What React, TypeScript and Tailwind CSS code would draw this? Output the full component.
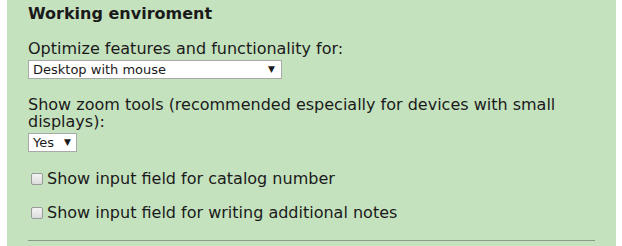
const App = () => {
  return (
    <div className="w-[622px] h-[246px] bg-white overflow-hidden" style={{ fontFamily: '"DejaVu Sans", Verdana, sans-serif' }}>
      <div className="ml-[7px] w-[609px] h-full bg-[#c5e2bf] pl-[21px] pr-[21px] pt-[4px] text-[#1a1a1a]">
        <h2 className="text-[16px] font-bold leading-[20px]">Working enviroment</h2>

        <div className="mt-[16px]">
          <label className="block text-[16px] leading-[18px]">Optimize features and functionality for:</label>
          <div className="mt-[2px] w-[254px] h-[19px] bg-white border border-[#a9a9a9] flex items-center justify-between pl-[4px] pr-[6px] text-[13px]">
            <span>Desktop with mouse</span>
            <span className="text-[9px]">▼</span>
          </div>
        </div>

        <div className="mt-[17px]">
          <label className="block text-[16px] leading-[17px]">
            Show zoom tools (recommended especially for devices with small displays):
          </label>
          <div className="mt-[3px] w-[49px] h-[19px] bg-white border border-[#a9a9a9] flex items-center justify-between pl-[4px] pr-[5px] text-[13px]">
            <span>Yes</span>
            <span className="text-[9px]">▼</span>
          </div>
        </div>

        <div className="mt-[18px] flex items-center gap-[4px] text-[16px] leading-[18px]">
          <span className="ml-[3px] w-[12px] h-[12px] rounded-[2px] border border-[#9a9a9a] bg-gradient-to-b from-[#f4f4f4] to-[#dcdcdc]" />
          <span>Show input field for catalog number</span>
        </div>

        <div className="mt-[16px] flex items-center gap-[4px] text-[16px] leading-[18px]">
          <span className="ml-[3px] w-[12px] h-[12px] rounded-[2px] border border-[#9a9a9a] bg-gradient-to-b from-[#f4f4f4] to-[#dcdcdc]" />
          <span>Show input field for writing additional notes</span>
        </div>

        <div className="mt-[18px] h-px bg-[#8a9a88]" />
      </div>
    </div>
  );
};

export default App;
